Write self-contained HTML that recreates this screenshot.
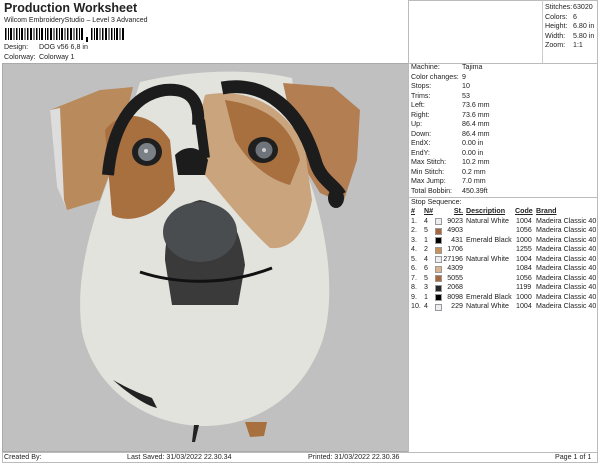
<!DOCTYPE html>
<html><head><meta charset="utf-8"><style>
*{margin:0;padding:0;box-sizing:border-box}
body{width:600px;height:464px;background:#fff;font-family:"Liberation Sans",Arial,sans-serif;font-size:7.1px;color:#222;position:relative;overflow:hidden}
.a{position:absolute;white-space:nowrap;line-height:9.5px}
.r{text-align:right}
.sw{position:absolute;width:7px;height:7px;border:1px solid #999}
</style></head><body>
<div class="a" style="left:4px;top:1px;font-size:12.5px;font-weight:bold;line-height:14px">Production Worksheet</div>
<div class="a" style="left:4px;top:16px;font-size:7px">Wilcom EmbroideryStudio – Level 3 Advanced</div>
<svg class="a" style="left:5px;top:28px" width="122" height="15">
<g fill="#000">
<rect x="0" y="0" width="1.5" height="12"/><rect x="3" y="0" width="1" height="12"/><rect x="5" y="0" width="2" height="12"/><rect x="8.5" y="0" width="1" height="12"/><rect x="11" y="0" width="1.5" height="12"/><rect x="14" y="0" width="1" height="12"/><rect x="16" y="0" width="2" height="12"/><rect x="19.5" y="0" width="1" height="12"/><rect x="22" y="0" width="1.5" height="12"/><rect x="25" y="0" width="2" height="12"/><rect x="28.5" y="0" width="1" height="12"/><rect x="31" y="0" width="1.5" height="12"/><rect x="34" y="0" width="1" height="12"/><rect x="36" y="0" width="2" height="12"/><rect x="40" y="0" width="1" height="12"/><rect x="42" y="0" width="1.5" height="12"/><rect x="45" y="0" width="2" height="12"/><rect x="48.5" y="0" width="1" height="12"/><rect x="51" y="0" width="1.5" height="12"/><rect x="54" y="0" width="1" height="12"/><rect x="56" y="0" width="2" height="12"/><rect x="59.5" y="0" width="1" height="12"/><rect x="62" y="0" width="1.5" height="12"/><rect x="65" y="0" width="2" height="12"/><rect x="68.5" y="0" width="1" height="12"/><rect x="71" y="0" width="1.5" height="12"/><rect x="74" y="0" width="1" height="12"/><rect x="76" y="0" width="2" height="12"/>
<rect x="81" y="9" width="2" height="5"/>
<rect x="86" y="0" width="1.5" height="12"/><rect x="89" y="0" width="1" height="12"/><rect x="91" y="0" width="2" height="12"/><rect x="94.5" y="0" width="1" height="12"/><rect x="97" y="0" width="1.5" height="12"/><rect x="100" y="0" width="2" height="12"/><rect x="103.5" y="0" width="1" height="12"/><rect x="106" y="0" width="1.5" height="12"/><rect x="109" y="0" width="1" height="12"/><rect x="111" y="0" width="2" height="12"/><rect x="114.5" y="0" width="1" height="12"/><rect x="117" y="0" width="2" height="12"/>
</g></svg>
<div class="a" style="left:4px;top:43px">Design:</div><div class="a" style="left:39px;top:43px">DOG v56 6,8 in</div>
<div class="a" style="left:4px;top:53px">Colorway:</div><div class="a" style="left:39px;top:53px">Colorway 1</div>

<div class="a" style="left:2px;top:63px;width:596px;height:0;border-top:1px solid #bbb"></div>
<div class="a" style="left:408px;top:0;width:190px;height:63px;border:1px solid #bbb;border-bottom:none"></div>
<div class="a" style="left:542px;top:0;height:63px;border-left:1px solid #ccc"></div>
<div class="a" style="left:545px;top:3px">Stitches:<br>Colors:<br>Height:<br>Width:<br>Zoom:</div>
<div class="a" style="left:573px;top:3px">63020<br>6<br>6.80 in<br>5.80 in<br>1:1</div>

<div class="a" style="left:2px;top:63px;width:407px;height:389px;background:#c0c0c0;border:1px solid #aaa"></div>
<svg class="a" style="left:0;top:0" width="410" height="452">
<path d="M140,82 C190,70 250,68 292,78 L302,160 C330,230 336,300 322,342 C300,402 250,426 205,426 C150,426 95,392 82,332 C75,282 88,230 112,170 Z" fill="#e3e3dd"/>
<path d="M50,110 L100,90 L133,87 L117,153 L100,200 L67,210 L57,187 Z" fill="#b98a5c"/>
<path d="M50,110 L60,108 L64,200 L67,210 L57,187Z" fill="#ddd"/>
<path d="M283,83 L333,87 L360,110 L357,160 L343,203 L320,193 L300,160 Z" fill="#b27e52"/>
<path d="M105,130 C120,110 150,110 170,140 L175,190 C160,215 130,225 112,215 Z" fill="#a8703f"/>
<path d="M205,95 C240,88 285,100 305,150 L312,200 C305,235 290,250 270,248 C250,230 225,200 205,175 C195,150 198,120 205,95Z" fill="#caa47c"/>
<path d="M225,100 C260,105 290,120 300,160 L290,185 C270,180 250,165 235,140Z" fill="#a8703f"/>
<path d="M108,175 C112,130 130,95 165,90 C190,88 200,100 198,125" stroke="#1c1c1c" stroke-width="12" fill="none"/>
<path d="M175,155 C185,145 200,145 208,160 L205,175 L178,175Z" fill="#1c1c1c"/>
<path d="M200,120 L205,158" stroke="#1c1c1c" stroke-width="10"/>
<path d="M222,88 C265,80 300,110 315,160 C320,180 335,185 340,195" stroke="#1c1c1c" stroke-width="13" fill="none"/>
<ellipse cx="336" cy="198" rx="8" ry="10" fill="#1c1c1c"/>
<ellipse cx="147" cy="152" rx="15" ry="14" fill="#1f1f1f"/><circle cx="147" cy="152" r="9" fill="#7a8086"/><circle cx="146" cy="151" r="2" fill="#ddd"/>
<ellipse cx="263" cy="150" rx="15" ry="13" fill="#1f1f1f"/><circle cx="264" cy="150" r="8.5" fill="#6e747a"/><circle cx="264" cy="150" r="2" fill="#ccc"/>
<path d="M165,260 C165,230 175,205 200,200 C230,205 240,230 245,265 L238,305 L172,305 Z" fill="#3a3a3a"/>
<ellipse cx="200" cy="232" rx="37" ry="30" fill="#4a4d50"/>
<path d="M140,272 C170,282 220,288 272,268" stroke="#111" stroke-width="3" fill="none"/>
<path d="M113,380 C130,395 145,405 157,408 L152,398 C135,392 122,385 113,380Z" fill="#222"/>
<path d="M245,422 L267,422 L264,436 L250,437Z" fill="#a8703f"/>
<path d="M194,425 L199,425 L195,442 L192,442Z" fill="#222"/>
</svg>

<div class="a" style="left:408px;top:63px;width:190px;height:389px;border-left:1px solid #bbb;border-right:1px solid #bbb"></div>
<div class="a" style="left:411px;top:63px">Machine:<br>Color changes:<br>Stops:<br>Trims:<br>Left:<br>Right:<br>Up:<br>Down:<br>EndX:<br>EndY:<br>Max Stitch:<br>Min Stitch:<br>Max Jump:<br>Total Bobbin:</div>
<div class="a" style="left:462px;top:63px">Tajima<br>9<br>10<br>53<br>73.6 mm<br>73.6 mm<br>86.4 mm<br>86.4 mm<br>0.00 in<br>0.00 in<br>10.2 mm<br>0.2 mm<br>7.0 mm<br>450.39ft</div>
<div class="a" style="left:408px;top:197px;width:190px;border-top:1px solid #bbb"></div>
<div class="a" style="left:411px;top:198px">Stop Sequence:</div>
<div class="a" style="left:411px;top:207px;font-weight:bold;text-decoration:underline">#</div>
<div class="a" style="left:424px;top:207px;font-weight:bold;text-decoration:underline">N#</div>
<div class="a r" style="left:440px;width:23px;top:207px;font-weight:bold;text-decoration:underline">St.</div>
<div class="a" style="left:466px;top:207px;font-weight:bold;text-decoration:underline">Description</div>
<div class="a" style="left:515px;top:207px;font-weight:bold;text-decoration:underline">Code</div>
<div class="a" style="left:536px;top:207px;font-weight:bold;text-decoration:underline">Brand</div>
<div class="a" style="left:411px;top:216.5px">1.<br>2.<br>3.<br>4.<br>5.<br>6.<br>7.<br>8.<br>9.<br>10.</div>
<div class="a" style="left:424px;top:216.5px">4<br>5<br>1<br>2<br>4<br>6<br>5<br>3<br>1<br>4</div>
<div class="sw" style="left:435px;top:218px;background:#eceef2"></div>
<div class="sw" style="left:435px;top:227.5px;background:#a8673a"></div>
<div class="sw" style="left:435px;top:237px;background:#000"></div>
<div class="sw" style="left:435px;top:246.5px;background:#c9905a"></div>
<div class="sw" style="left:435px;top:256px;background:#eceef2"></div>
<div class="sw" style="left:435px;top:265.5px;background:#d9b48f"></div>
<div class="sw" style="left:435px;top:275px;background:#a8673a"></div>
<div class="sw" style="left:435px;top:284.5px;background:#25292c"></div>
<div class="sw" style="left:435px;top:294px;background:#000"></div>
<div class="sw" style="left:435px;top:303.5px;background:#eceef2"></div>
<div class="a r" style="left:440px;width:23px;top:216.5px">9023<br>4903<br>431<br>1706<br>27196<br>4309<br>5055<br>2068<br>8098<br>229</div>
<div class="a" style="left:466px;top:216.5px">Natural White<br>&nbsp;<br>Emerald Black<br>&nbsp;<br>Natural White<br>&nbsp;<br>&nbsp;<br>&nbsp;<br>Emerald Black<br>Natural White</div>
<div class="a" style="left:516px;top:216.5px">1004<br>1056<br>1000<br>1255<br>1004<br>1084<br>1056<br>1199<br>1000<br>1004</div>
<div class="a" style="left:536px;top:216.5px">Madeira Classic 40<br>Madeira Classic 40<br>Madeira Classic 40<br>Madeira Classic 40<br>Madeira Classic 40<br>Madeira Classic 40<br>Madeira Classic 40<br>Madeira Classic 40<br>Madeira Classic 40<br>Madeira Classic 40</div>

<div class="a" style="left:2px;top:452px;width:596px;height:11px;border:1px solid #bbb"></div>
<div class="a" style="left:4px;top:452.5px">Created By:</div>
<div class="a" style="left:127px;top:452.5px">Last Saved: 31/03/2022 22.30.34</div>
<div class="a" style="left:308px;top:452.5px">Printed: 31/03/2022 22.30.36</div>
<div class="a" style="left:555px;top:452.5px">Page 1 of 1</div>
</body></html>
